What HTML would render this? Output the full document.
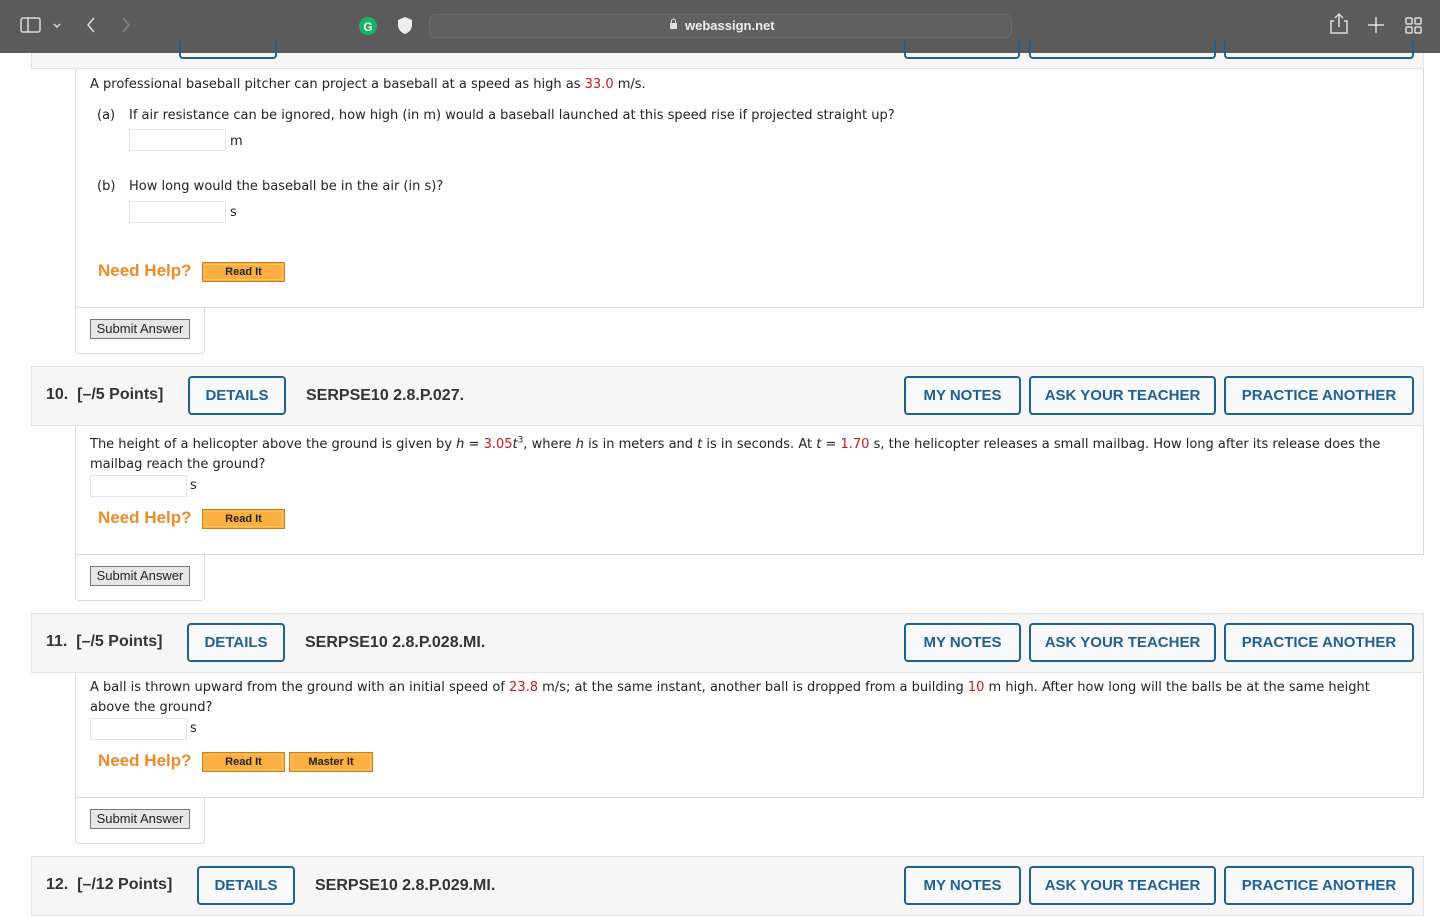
<!DOCTYPE html>
<html><head><meta charset="utf-8"><style>
*{box-sizing:border-box;margin:0;padding:0}
body{width:1440px;height:900px;overflow:hidden;background:#fff;position:relative;font-family:"DejaVu Sans",Verdana,sans-serif;font-size:13px;color:#222}
.a{position:absolute}
.hdr{position:absolute;left:31px;width:1393px;height:60px;background:#f6f6f6;border:1px solid #e2e2e2}
.box{position:absolute;left:75px;width:1349px;background:#fff;border:1px solid #d9d9d9;border-top:none}
.sub{position:absolute;left:75px;width:130px;height:46px;background:#fff;border:1px solid #d9d9d9;border-top:none;border-radius:0 0 4px 4px}
.sbtn{position:absolute;left:14px;top:11px;width:100px;height:20px;background:#e6e6e6;border:1px solid #777;font-family:"Liberation Sans",Arial,sans-serif;font-size:13px;text-align:center;line-height:18px;color:#222}
.btn{position:absolute;height:39px;border:2px solid #1f5f93;border-radius:4px;color:#1f5f93;font-family:"Liberation Sans",Arial,sans-serif;font-weight:bold;font-size:15px;text-align:center;line-height:36px;background:#f8f9fa}
.num{position:absolute;font-family:"Liberation Sans",Arial,sans-serif;font-weight:bold;font-size:16px;color:#333}
.need{position:absolute;left:98px;font-family:"Liberation Sans",Arial,sans-serif;font-weight:bold;font-size:17px;color:#f08a24}
.read{position:absolute;height:20px;background:#fbb040;border:1px solid #d7781a;outline:1px solid #f9c56a;outline-offset:-3px;font-family:"Liberation Sans",Arial,sans-serif;font-weight:bold;font-size:11px;text-align:center;line-height:19px;color:#222}
.inp{position:absolute;width:97px;height:22px;border:1px solid #e6e6e6;background:#fff}
.r{color:#d01818}
sup{line-height:0;font-size:9px}
</style></head><body>
<div class="a" style="left:0;top:0;width:1440px;height:53px;background:#5b5b5b"></div>
<svg class="a" style="left:0;top:0" width="1440" height="53">
<g stroke="#ddd" fill="none" stroke-width="1.5">
<rect x="21" y="18" width="19" height="14" rx="2"/><line x1="28" y1="18" x2="28" y2="32"/>
<polyline points="54,24 57,27 60,24"/>
<polyline points="94,18 88,25 94,32"/>
<polyline points="123,18 129,25 123,32" stroke="#888"/>
<path d="M1334 21 h-3 v12 h16 v-12 h-3 M1339 27 v-12 M1335 18 l4-4 4 4"/>
<path d="M1376 17 v16 M1368 25 h16"/>
<rect x="1406" y="18" width="6" height="6" rx="1"/><rect x="1415" y="18" width="6" height="6" rx="1"/><rect x="1406" y="27" width="6" height="6" rx="1"/><rect x="1415" y="27" width="6" height="6" rx="1"/>
<path d="M1003 22 a5 5 0 1 1 -4 -3" stroke="#ccc"/>
</g>
<circle cx="368" cy="26" r="9" fill="#18b463"/><text x="368" y="31" fill="#fff" font-size="12" font-weight="bold" text-anchor="middle" font-family="Liberation Sans">G</text>
<path d="M405 17 l7 3 v5 c0 5-4 8-7 9 c-3-1-7-4-7-9 v-5z" fill="#eee"/>
<rect x="429.5" y="14.5" width="582" height="23" rx="6" fill="#606060" stroke="#6c6c6c"/>
<rect x="670" y="23" width="7" height="6" fill="#ddd"/><path d="M671.5 23 v-2 a2 2 0 0 1 4 0 v2" stroke="#ddd" fill="none"/>
<text x="685" y="30" fill="#eee" font-size="13" font-weight="bold" font-family="Liberation Sans">webassign.net</text>
</svg>

<div class="a" style="left:31px;top:53px;width:1393px;height:16px;background:#f6f6f6;border:1px solid #e2e2e2;border-top:none"></div>
<div class="a" style="left:179px;top:40px;width:98px;height:19px;border:2px solid #1f5f93;border-top:none;border-radius:0 0 4px 4px"></div>
<div class="a" style="left:904px;top:40px;width:116px;height:19px;border:2px solid #1f5f93;border-top:none;border-radius:0 0 4px 4px"></div>
<div class="a" style="left:1029px;top:40px;width:187px;height:19px;border:2px solid #1f5f93;border-top:none;border-radius:0 0 4px 4px"></div>
<div class="a" style="left:1224px;top:40px;width:190px;height:19px;border:2px solid #1f5f93;border-top:none;border-radius:0 0 4px 4px"></div>
<div class="box" style="top:69px;height:239px"></div>
<div class="a" style="left:90px;top:77px">A professional baseball pitcher can project a baseball at a speed as high as <span class="r">33.0</span> m/s.</div>
<div class="a" style="left:97px;top:108px">(a)</div>
<div class="a" style="left:129px;top:108px">If air resistance can be ignored, how high (in m) would a baseball launched at this speed rise if projected straight up?</div>
<div class="inp" style="left:129px;top:129px"></div><div class="a" style="left:230px;top:134px">m</div>
<div class="a" style="left:97px;top:179px">(b)</div>
<div class="a" style="left:129px;top:179px">How long would the baseball be in the air (in s)?</div>
<div class="inp" style="left:129px;top:201px"></div><div class="a" style="left:230px;top:205px">s</div>
<div class="need" style="top:261px">Need Help?</div>
<div class="read" style="left:202px;top:262px;width:83px">Read It</div>
<div class="sub" style="top:308px"><div class="sbtn">Submit Answer</div></div>

<div class="hdr" style="top:366px"></div>
<div class="num" style="left:46px;top:386px">10.&nbsp; [–/5 Points]</div>
<div class="btn" style="left:188px;top:376px;width:98px">DETAILS</div>
<div class="num" style="left:306px;top:387px">SERPSE10 2.8.P.027.</div>
<div class="btn" style="left:904px;top:376px;width:117px">MY NOTES</div>
<div class="btn" style="left:1029px;top:376px;width:187px">ASK YOUR TEACHER</div>
<div class="btn" style="left:1224px;top:376px;width:190px">PRACTICE ANOTHER</div>
<div class="box" style="top:426px;height:129px"></div>
<div class="a" style="left:90px;top:435px;width:1320px;line-height:20px">The height of a helicopter above the ground is given by <i>h</i> = <span class="r">3.05</span><i>t</i><sup>3</sup>, where <i>h</i> is in meters and <i>t</i> is in seconds. At <i>t</i> = <span class="r">1.70</span> s, the helicopter releases a small mailbag. How long after its release does the mailbag reach the ground?</div>
<div class="inp" style="left:90px;top:475px"></div><div class="a" style="left:190px;top:478px">s</div>
<div class="need" style="top:508px">Need Help?</div>
<div class="read" style="left:202px;top:509px;width:83px">Read It</div>
<div class="sub" style="top:555px"><div class="sbtn">Submit Answer</div></div>

<div class="hdr" style="top:613px"></div>
<div class="num" style="left:46px;top:633px">11.&nbsp; [–/5 Points]</div>
<div class="btn" style="left:187px;top:623px;width:98px">DETAILS</div>
<div class="num" style="left:305px;top:634px">SERPSE10 2.8.P.028.MI.</div>
<div class="btn" style="left:904px;top:623px;width:117px">MY NOTES</div>
<div class="btn" style="left:1029px;top:623px;width:187px">ASK YOUR TEACHER</div>
<div class="btn" style="left:1224px;top:623px;width:190px">PRACTICE ANOTHER</div>
<div class="box" style="top:673px;height:125px"></div>
<div class="a" style="left:90px;top:678px;width:1320px;line-height:20px">A ball is thrown upward from the ground with an initial speed of <span class="r">23.8</span> m/s; at the same instant, another ball is dropped from a building <span class="r">10</span> m high. After how long will the balls be at the same height above the ground?</div>
<div class="inp" style="left:90px;top:718px"></div><div class="a" style="left:190px;top:721px">s</div>
<div class="need" style="top:751px">Need Help?</div>
<div class="read" style="left:202px;top:752px;width:83px">Read It</div>
<div class="read" style="left:289px;top:752px;width:84px">Master It</div>
<div class="sub" style="top:798px"><div class="sbtn">Submit Answer</div></div>

<div class="hdr" style="top:856px;height:60px"></div>
<div class="num" style="left:46px;top:876px">12.&nbsp; [–/12 Points]</div>
<div class="btn" style="left:197px;top:866px;width:98px">DETAILS</div>
<div class="num" style="left:315px;top:877px">SERPSE10 2.8.P.029.MI.</div>
<div class="btn" style="left:904px;top:866px;width:117px">MY NOTES</div>
<div class="btn" style="left:1029px;top:866px;width:187px">ASK YOUR TEACHER</div>
<div class="btn" style="left:1224px;top:866px;width:190px">PRACTICE ANOTHER</div>
</body></html>
